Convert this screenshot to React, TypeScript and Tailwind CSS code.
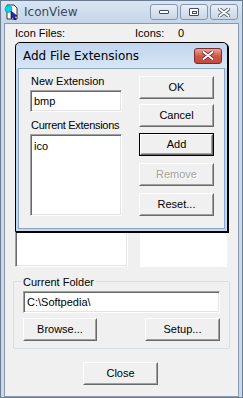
import React from "react";

const font = { fontFamily: '"Liberation Sans", Arial, sans-serif' };

function Btn({
  label,
  className = "",
  disabled = false,
  primary = false,
}: {
  label: string;
  className?: string;
  disabled?: boolean;
  primary?: boolean;
}) {
  return (
    <div className={`${primary ? "border border-black" : ""} ${className}`}>
      <div className="h-full w-full border border-t-white border-l-white border-r-[#696969] border-b-[#696969] bg-[#f0f0f0]">
        <div className="flex h-full w-full items-center justify-center border border-transparent border-r-[#a0a0a0] border-b-[#a0a0a0] text-[11px]">
          <span
            className={disabled ? "text-[#a0a0a0] [text-shadow:1px_1px_0_#fff]" : "text-black"}
          >
            {label}
          </span>
        </div>
      </div>
    </div>
  );
}

function Field({
  value,
  className = "",
  top = false,
}: {
  value: string;
  className?: string;
  top?: boolean;
}) {
  return (
    <div
      className={`flex ${top ? "items-start pt-[3px]" : "items-center"} border border-t-[#a0a0a0] border-l-[#a0a0a0] border-r-white border-b-white bg-white px-[3px] text-[11px] shadow-[inset_1px_1px_0_#696969,inset_-1px_-1px_0_#e3e3e3] ${className}`}
    >
      {value}
    </div>
  );
}

function AppIcon() {
  return (
    <svg width="16" height="16" viewBox="0 0 16 16">
      <path d="M3 1h7l3 3v11H3z" fill="#fff" stroke="#333" strokeWidth="1" />
      <circle cx="4.5" cy="5" r="3.5" fill="#00d8e8" stroke="#008ea0" strokeWidth="0.6" />
      <path d="M7 7l6 5-2.5 0.5 1.5 3-1.5 0.5-1.5-3L7 14.5z" fill="#1c2bd0" stroke="#000" strokeWidth="0.6" />
    </svg>
  );
}

function CapBtn({ children, red = false }: { children: React.ReactNode; red?: boolean }) {
  return (
    <div
      className={`flex h-[16px] w-[28px] items-center justify-center rounded-[3px] border ${
        red
          ? "border-[#7a2c2c] bg-gradient-to-b from-[#e8a49a] via-[#d0574a] to-[#c24a3e]"
          : "border-[#8496ad] bg-gradient-to-b from-[#e9eff6] to-[#c9d6e5]"
      }`}
    >
      {children}
    </div>
  );
}

function CloseGlyph({ color = "#fff", stroke = "#555" }: { color?: string; stroke?: string }) {
  return (
    <svg width="12" height="9" viewBox="0 0 12 9">
      <path d="M1.5 1L10.5 8M10.5 1L1.5 8" stroke={stroke} strokeWidth="3.6" strokeLinecap="round" />
      <path d="M1.5 1L10.5 8M10.5 1L1.5 8" stroke={color} strokeWidth="2" strokeLinecap="round" />
    </svg>
  );
}

export default function App() {
  return (
    <div
      className="relative flex h-[398px] w-[243px] flex-col overflow-hidden border border-[#6b7c91] bg-[#c9d8ea]"
      style={font}
    >
      {/* title bar */}
      <div className="flex h-[22px] items-center bg-gradient-to-b from-[#d8e5f3] to-[#c5d5e8] pl-[3px] pr-[4px]">
        <AppIcon />
        <span className="ml-[4px] text-[12px] text-[#3a4a5c]" style={{ fontFamily: '"DejaVu Sans", sans-serif' }}>
          IconView
        </span>
        <div className="ml-auto flex gap-[2px]">
          <CapBtn>
            <div className="h-[4px] w-[10px] rounded-[1px] border border-[#3e4c5e] bg-white" />
          </CapBtn>
          <CapBtn>
            <div className="flex h-[8px] w-[10px] items-center justify-center rounded-[1px] border border-[#3e4c5e] bg-white">
              <div className="h-[3px] w-[5px] border border-[#3e4c5e]" />
            </div>
          </CapBtn>
          <CapBtn>
            <CloseGlyph color="#fff" stroke="#4b5a6d" />
          </CapBtn>
        </div>
      </div>

      {/* client area */}
      <div className="mx-[3px] flex flex-1 flex-col border border-[#8999ad] bg-[#f0f0f0] text-[11px]">
        <div className="flex h-[17px] items-end pl-[10px]">
          <span className="w-[120px]">Icon Files:</span>
          <span className="w-[43px]">Icons:</span>
          <span>0</span>
        </div>
        <div className="mt-[3px] flex h-[223px] gap-[12px] pl-[10px] pr-[11px]">
          <div className="w-[113px] border border-t-[#a0a0a0] border-l-[#a0a0a0] border-r-white border-b-white bg-white shadow-[inset_1px_1px_0_#696969,inset_-1px_-1px_0_#e3e3e3]" />
          <div className="mt-[2px] flex-1 bg-white" />
        </div>

        {/* group box */}
        <div className="relative mx-[8px] mt-[14px] h-[68px] rounded-[2px] border border-[#d5dfe5] px-[9px] pt-[9px]">
          <span className="absolute -top-[8px] left-[7px] bg-[#f0f0f0] px-[2px]">Current Folder</span>
          <Field value="C:\Softpedia\" className="h-[22px]" />
          <div className="mt-[5px] flex justify-between">
            <Btn label="Browse..." className="h-[23px] w-[74px]" />
            <Btn label="Setup..." className="h-[23px] w-[75px]" />
          </div>
        </div>

        <div className="mt-[13px] flex justify-center pr-[2px]">
          <Btn label="Close" className="h-[23px] w-[75px]" />
        </div>
      </div>

      {/* dialog window */}
      <div className="absolute left-[14px] top-[41px] flex h-[190px] w-[213px] flex-col rounded-t-[5px] border border-black bg-[#c3d7ee] text-[11px] shadow-[1px_1px_0_#000]">
        <div className="flex h-[25px] items-center rounded-t-[5px] bg-gradient-to-b from-[#c0d5ee] to-[#d8e6f4] pl-[7px] pr-[5px]">
          <span className="text-[12px] text-black" style={{ fontFamily: '"DejaVu Sans", sans-serif' }}>
            Add File Extensions
          </span>
          <div className="ml-auto">
            <CapBtn red>
              <CloseGlyph color="#fff" stroke="#7a2c2c" />
            </CapBtn>
          </div>
        </div>
        <div className="mx-[2px] mb-[2px] flex flex-1 border border-[#8aa6c6] bg-[#f0f0f0] pl-[11px] pr-[10px] pt-[7px]">
          <div className="flex w-[92px] flex-col">
            <span className="-mt-[1px] whitespace-nowrap pl-[1px] leading-[13px]">New Extension</span>
            <Field value="bmp" className="mt-[2px] h-[22px]" />
            <span className="mt-[7px] whitespace-nowrap pl-[1px] leading-[13px] tracking-[-0.3px]">
              Current Extensions
            </span>
            <Field value="ico" top className="mt-[2px] h-[82px]" />
          </div>
          <div className="ml-auto flex w-[75px] flex-col">
            <Btn label="OK" className="h-[23px]" />
            <Btn label="Cancel" className="mt-[5px] h-[23px]" />
            <Btn label="Add" primary className="mt-[6px] h-[23px]" />
            <Btn label="Remove" disabled className="mt-[7px] h-[23px]" />
            <Btn label="Reset..." className="mt-[7px] h-[23px]" />
          </div>
        </div>
      </div>
    </div>
  );
}
